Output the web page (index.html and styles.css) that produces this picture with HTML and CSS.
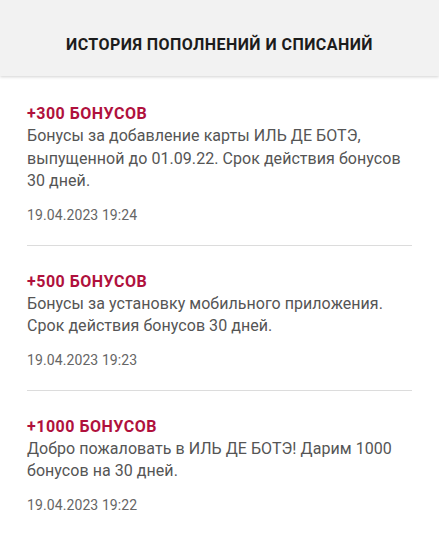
FILE: index.html
```html
<!DOCTYPE html>
<html lang="ru">
<head>
<meta charset="utf-8">
<link rel="stylesheet" href="styles.css">
</head>
<body>
<header class="header">
  <h1 class="header-title">ИСТОРИЯ ПОПОЛНЕНИЙ И СПИСАНИЙ</h1>
</header>
<main class="list">
  <section class="item">
    <div class="item-title">+300 БОНУСОВ</div>
    <p class="item-text">Бонусы за добавление карты ИЛЬ ДЕ БОТЭ, выпущенной до 01.09.22. Срок действия бонусов 30 дней.</p>
    <div class="item-date">19.04.2023 19:24</div>
  </section>
  <section class="item">
    <div class="item-title">+500 БОНУСОВ</div>
    <p class="item-text">Бонусы за установку мобильного приложения. Срок действия бонусов 30 дней.</p>
    <div class="item-date">19.04.2023 19:23</div>
  </section>
  <section class="item item-last">
    <div class="item-title">+1000 БОНУСОВ</div>
    <p class="item-text">Добро пожаловать в ИЛЬ ДЕ БОТЭ! Дарим 1000 бонусов на 30 дней.</p>
    <div class="item-date">19.04.2023 19:22</div>
  </section>
</main>
</body>
</html>
```
FILE: styles.css
```css
* { box-sizing: border-box; }
html, body {
  margin: 0;
  padding: 0;
  background: #ffffff;
  font-family: Roboto, "Noto Sans", Arial, sans-serif;
}
.header {
  height: 76px;
  background: #f2f2f2;
  display: flex;
  align-items: center;
  justify-content: center;
  box-shadow: 0 1px 3px rgba(0,0,0,0.18);
  position: relative;
}
.header-title {
  margin: 0;
  padding-top: 13px;
  font-size: 16px;
  font-weight: 700;
  color: #1c1c1c;
  letter-spacing: 0.45px;
}
.list {
  display: flex;
  flex-direction: column;
  padding-top: 2px;
}
.item {
  margin: 0 27px;
  padding: 25px 0 20px;
  border-bottom: 1px solid #dcdcdc;
}
.item-last { border-bottom: none; }
.item-title {
  font-size: 16px;
  line-height: 22px;
  font-weight: 700;
  color: #b0113d;
  letter-spacing: 0.5px;
}
.item-text {
  margin: 0;
  font-size: 16px;
  line-height: 22.5px;
  color: #555555;
  letter-spacing: 0.05px;
}
.item-date {
  margin-top: 12px;
  font-size: 14px;
  line-height: 20px;
  color: #666666;
  letter-spacing: 0.1px;
}
```
